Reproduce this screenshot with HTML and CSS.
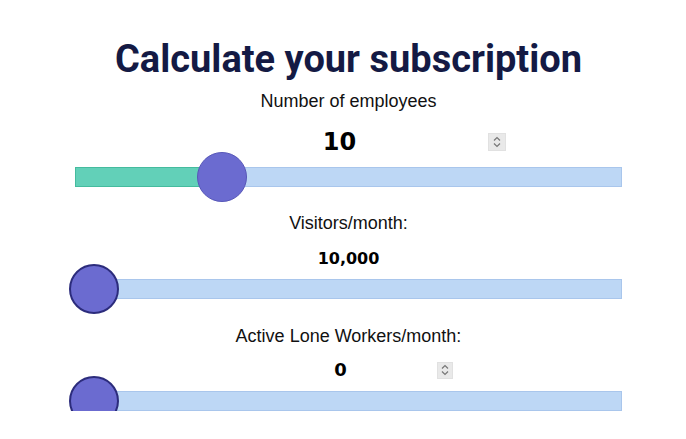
FILE: index.html
```html
<!DOCTYPE html>
<html lang="en">
  <head>
    <meta charset="UTF-8" />
    <meta name="viewport" content="width=device-width, initial-scale=1.0" />
    <title>Calculate your subscription</title>
    <link rel="stylesheet" href="styles.css">
  </head>
  <body>
    <div class="calculator">
      <h1>Calculate your subscription</h1>

      <div class="field field-employees">
        <div class="field-label">Number of employees</div>
        <div class="number number-wide">
          <span class="number-value">10</span>
          <span class="spinner">
            <svg width="12" height="14" viewBox="0 0 12 14">
              <path d="M3 5.5 L6 2.5 L9 5.5" fill="none" stroke="#777" stroke-width="1.2" />
              <path d="M3 8.5 L6 11.5 L9 8.5" fill="none" stroke="#777" stroke-width="1.2" />
            </svg>
          </span>
        </div>
        <div class="slider">
          <div class="slider-fill" style="width: 146px"></div>
          <div class="slider-thumb slider-thumb-active" style="left: 121px"></div>
        </div>
      </div>

      <div class="field field-visitors">
        <div class="field-label">Visitors/month:</div>
        <div class="number">
          <span class="number-value number-small">10,000</span>
        </div>
        <div class="slider">
          <div class="slider-thumb" style="left: -7px"></div>
        </div>
      </div>

      <div class="field field-workers">
        <div class="field-label">Active Lone Workers/month:</div>
        <div class="number number-narrow">
          <span class="number-value number-medium">0</span>
          <span class="spinner">
            <svg width="12" height="14" viewBox="0 0 12 14">
              <path d="M3 5.5 L6 2.5 L9 5.5" fill="none" stroke="#777" stroke-width="1.2" />
              <path d="M3 8.5 L6 11.5 L9 8.5" fill="none" stroke="#777" stroke-width="1.2" />
            </svg>
          </span>
        </div>
        <div class="slider">
          <div class="slider-thumb" style="left: -7px"></div>
        </div>
      </div>
    </div>
  </body>
</html>
```

FILE: styles.css
```css
body {
  margin: 0;
  background-color: #ffffff;
  font-family: "Liberation Sans", Arial, sans-serif;
  color: #111111;
}
.calculator {
  width: 547px;
  margin-left: 75px;
  text-align: center;
}
h1 {
  margin: 37px 0 0;
  font-family: Roboto, "Liberation Sans", sans-serif;
  font-weight: 700;
  font-size: 38px;
  line-height: 44px;
  color: #141a44;
}
.field-label {
  font-size: 18px;
  line-height: 20px;
}
.field-employees .field-label {
  margin-top: 10px;
}
.field-visitors .field-label {
  margin-top: 26px;
}
.field-workers .field-label {
  margin-top: 27px;
}
.number {
  display: flex;
  align-items: center;
  margin: 0 auto;
  font-family: "DejaVu Sans", Verdana, sans-serif;
  font-weight: bold;
  color: #000000;
}
.number-value {
  flex: 1;
  text-align: center;
  font-size: 24px;
  line-height: 28px;
}
.number-small {
  font-size: 16px;
  line-height: 20px;
}
.number-medium {
  font-size: 18px;
  line-height: 22px;
}
.number-wide {
  width: 314px;
  margin-top: 17px;
}
.field-visitors .number {
  margin-top: 16px;
}
.number-narrow {
  width: 208px;
  margin-top: 13px;
}
.spinner {
  display: flex;
  align-items: center;
  justify-content: center;
  width: 18px;
  height: 18px;
  background-color: #e9e9e9;
  border: 1px solid #e1e1e1;
  box-sizing: border-box;
}
.number-narrow .spinner {
  width: 16px;
  height: 17px;
}
.slider {
  position: relative;
  height: 20px;
  box-sizing: border-box;
  background-color: #bdd7f5;
  border: 1px solid #a9c6ec;
  margin-top: 11px;
}
.field-visitors .slider {
  margin-top: 10px;
}
.field-workers .slider {
  margin-top: 10px;
}
.slider-fill {
  position: absolute;
  top: -1px;
  left: -1px;
  height: 20px;
  box-sizing: border-box;
  background-color: #62d0b8;
  border: 1px solid #45bb9e;
}
.slider-thumb {
  position: absolute;
  top: -16px;
  width: 50px;
  height: 50px;
  box-sizing: border-box;
  border-radius: 50%;
  background-color: #6b6bd0;
  border: 2px solid #2c2c7c;
}
.slider-thumb-active {
  border: 1px solid #5757b8;
}
```
